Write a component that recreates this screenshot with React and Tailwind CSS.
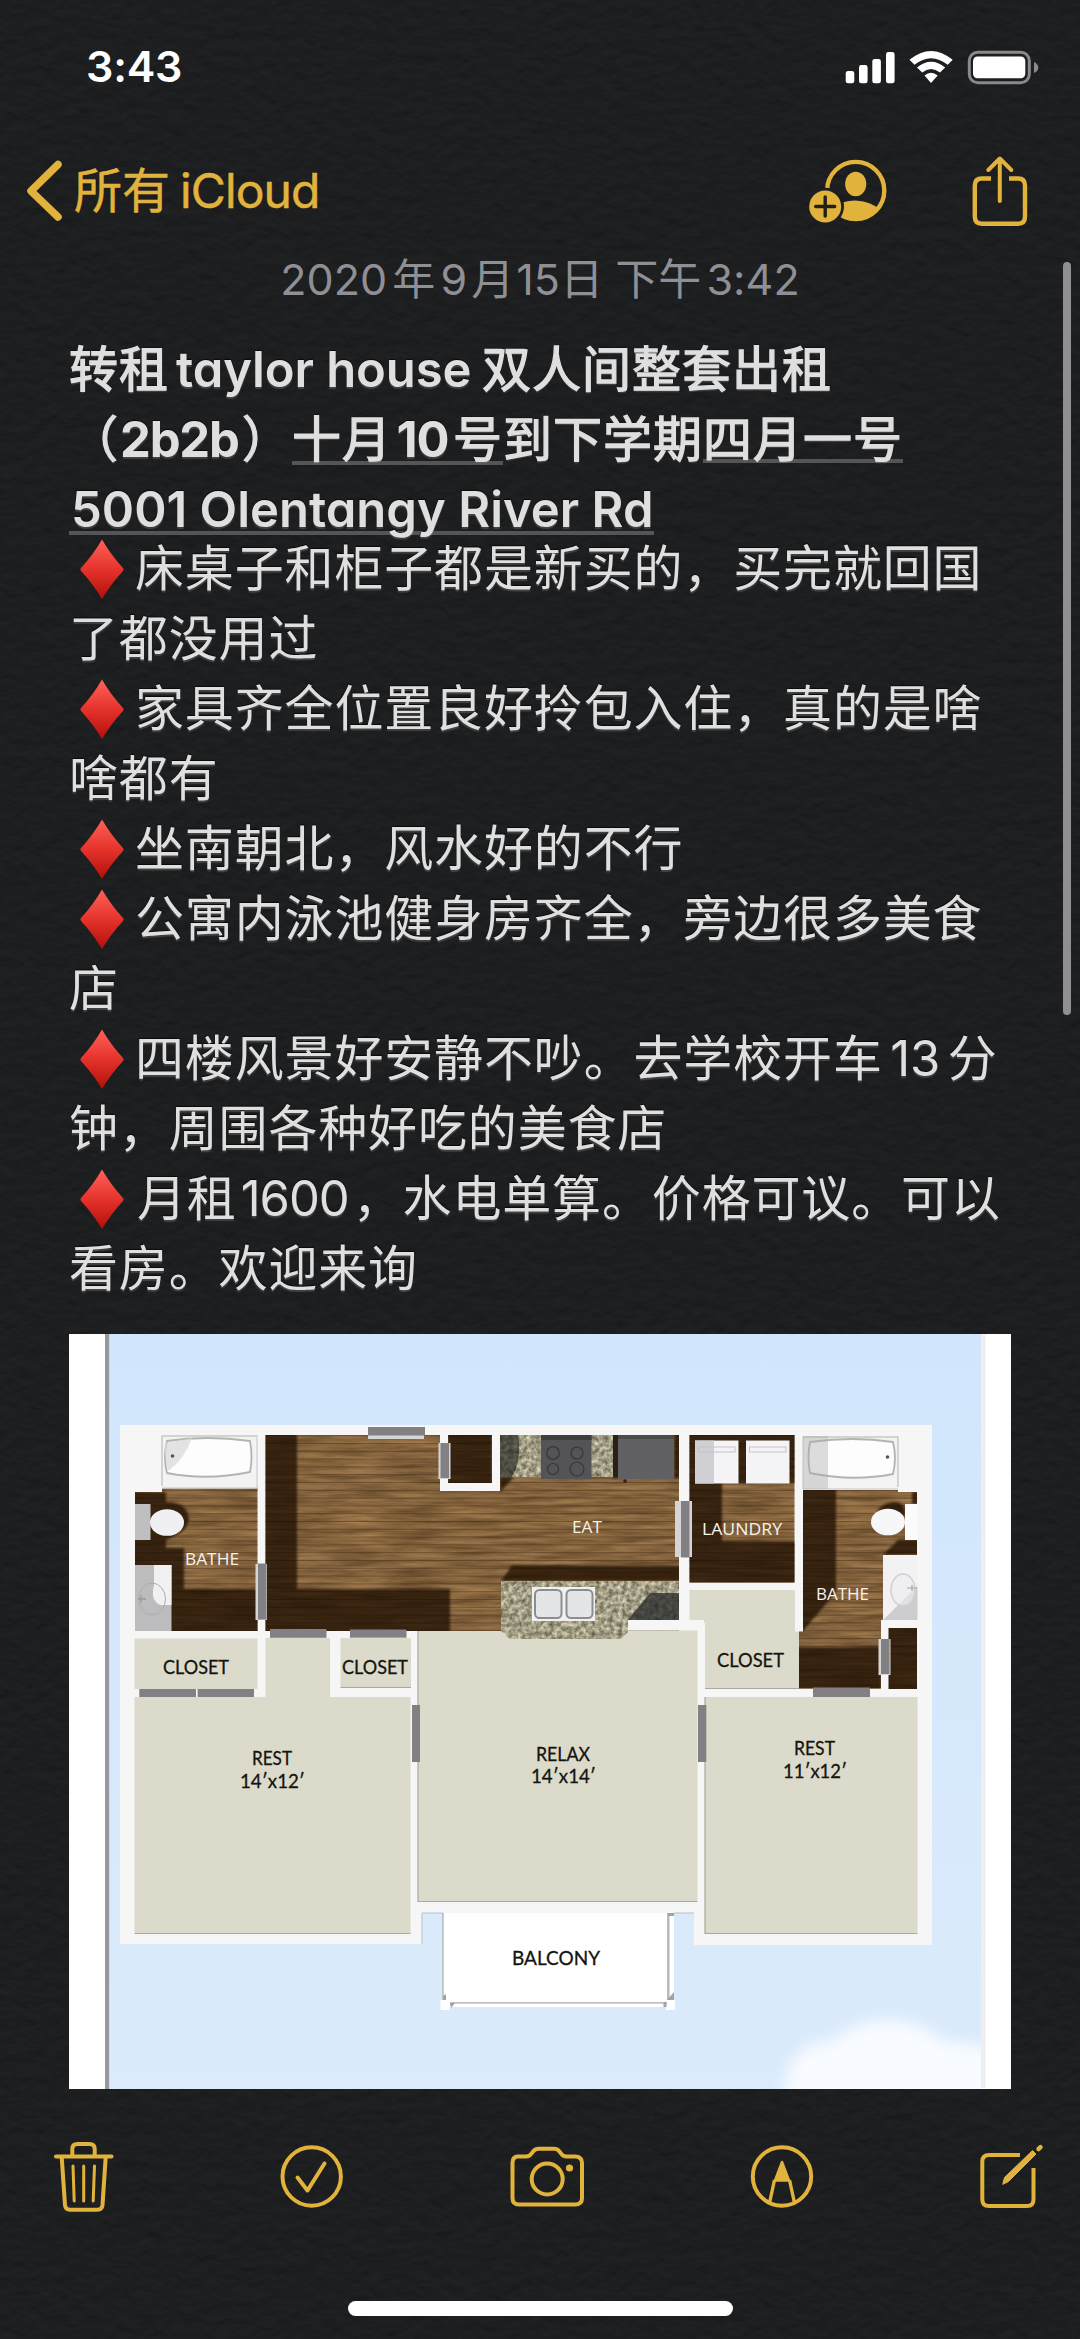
import React from "react";

const GOLD = "#e2b33c";

function PaperTexture() {
  return (
    <svg className="absolute inset-0 h-full w-full" aria-hidden="true">
      <filter id="paper" x="0" y="0" width="100%" height="100%" colorInterpolationFilters="sRGB">
        <feTurbulence type="fractalNoise" baseFrequency="0.065 0.085" numOctaves="3" seed="8" />
        <feDiffuseLighting surfaceScale="1.1" diffuseConstant="1" lightingColor="#212325">
          <feDistantLight azimuth="270" elevation="60" />
        </feDiffuseLighting>
      </filter>
      <rect width="100%" height="100%" filter="url(#paper)" />
    </svg>
  );
}

function StatusBar() {
  return (
    <div className="flex h-[133px] shrink-0 items-center justify-between pl-[86px] pr-[41px] text-white">
      <span className="text-[43px] font-semibold leading-none tracking-[-0.2px]">3:43</span>
      <svg width="194" height="36" viewBox="846 48 194 36" fill="#fff">
        <rect x="846.7" y="70" width="8.6" height="12.3" rx="2.4" />
        <rect x="860" y="64" width="8.6" height="18.3" rx="2.4" />
        <rect x="873.3" y="58" width="8.6" height="24.3" rx="2.4" />
        <rect x="887" y="51" width="8.6" height="31.3" rx="2.4" />
        <path d="M910.5 58.8 Q932 41 953.7 58.8 L948.7 63.8 Q932 50.5 915.5 63.8 Z" />
        <path d="M918 66.5 Q932 55 946.2 66.5 L941 71.5 Q932 64.5 923.2 71.5 Z" />
        <path d="M925.5 74.4 Q932 69 938.7 74.4 L932 82 Z" />
        <rect x="970.3" y="51.3" width="60" height="30.4" rx="8.5" fill="none" stroke="#8a8a8c" strokeWidth="3" />
        <rect x="974" y="55.5" width="52.3" height="21.7" rx="4.5" />
        <path d="M1035 61 Q1039.3 63 1039.3 66.5 Q1039.3 70 1035 72 Z" fill="#8a8a8c" />
      </svg>
    </div>
  );
}

function NavBar() {
  return (
    <div className="flex h-[116px] shrink-0 items-center justify-between pl-[26px] pr-[51px]">
      <div className="flex items-center">
        <svg width="36" height="62" viewBox="26 160 36 62" fill="none" stroke={GOLD} strokeWidth="7.5" strokeLinecap="round" strokeLinejoin="round">
          <path d="M58 164.5 L31 191 L58 217" />
        </svg>
        <span className="ml-[12px] whitespace-nowrap text-[48px] leading-[60px] text-[#e2b33c] [-webkit-text-stroke:0.5px_#e2b33c]">
          所有<span className="ml-[10px] tracking-[-0.9px]">iCloud</span>
        </span>
      </div>
      <svg width="222" height="72" viewBox="807 153 222 72" fill="none" stroke={GOLD} strokeWidth="4.4">
        <clipPath id="avatar">
          <circle cx="855.7" cy="188.5" r="29" />
        </clipPath>
        <mask id="badge-gap">
          <rect x="800" y="140" width="240" height="100" fill="#fff" stroke="none" />
          <circle cx="825.2" cy="204.5" r="18.8" fill="#000" stroke="none" />
        </mask>
        <g mask="url(#badge-gap)">
          <circle cx="855.7" cy="188.5" r="28.6" />
          <ellipse cx="855.7" cy="182" rx="10.6" ry="12.2" fill={GOLD} stroke="none" />
          <path clipPath="url(#avatar)" d="M834 209 Q838 198.5 855.7 198.5 Q872 199.5 880 208 L880 222 L834 222 Z" fill={GOLD} stroke="none" />
        </g>
        <circle cx="825.2" cy="204.5" r="16" fill={GOLD} stroke="none" />
        <path d="M825.2 195 V214 M815.7 204.5 H834.7" stroke="#241f14" strokeWidth="3.4" strokeLinecap="round" />
        <path d="M991 176.5 H982 Q974.8 176.5 974.8 183.5 V214.5 Q974.8 221.7 982 221.7 H1018 Q1025 221.7 1025 214.5 V183.5 Q1025 176.5 1018 176.5 H1009" />
        <path d="M999.8 199 V156.5 M988.3 168 L999.8 156.5 L1011.3 168" strokeWidth="4" strokeLinecap="round" strokeLinejoin="round" />
      </svg>
    </div>
  );
}

function Diamond() {
  return (
    <svg className="inline-block h-[62px] w-[66px] shrink-0" viewBox="0 0 66 62">
      <defs>
        <linearGradient id="red" x1="0" y1="0" x2="0" y2="1">
          <stop offset="0" stopColor="#ff6259" />
          <stop offset="0.5" stopColor="#e5332b" />
          <stop offset="1" stopColor="#b30f0b" />
        </linearGradient>
      </defs>
      <path d="M33 1.5 Q42 17 54 30 Q55.5 31.5 54 33 Q42 46 33 61 Q24 46 12 33 Q10.5 31.5 12 30 Q24 17 33 1.5 Z" fill="url(#red)" />
    </svg>
  );
}

function Line({ mark, children }) {
  return (
    <div className="flex h-[70px] items-center whitespace-nowrap leading-[70px]">
      {mark && <Diamond />}
      <span>{children}</span>
    </div>
  );
}

function Han({ children }) {
  return <span className="font-normal [-webkit-text-stroke:1.3px_#dfdfe0]">{children}</span>;
}

const textShadow = "[text-shadow:0_-1px_1px_rgba(0,0,0,0.7),0_2px_1px_rgba(150,150,150,0.3)]";

function Note() {
  return (
    <div className={"pl-[69px] text-[49px] text-[#dfdfe0] " + textShadow}>
      <div className="h-[200px] pt-px font-semibold whitespace-nowrap tracking-[1px] leading-[70px]">
        <div className="flex h-[70px]">
          <Han>转租</Han>
          <span className="ml-[7px] w-[306px] tracking-[-0.1px] [font-feature-settings:'cv11']">taylor house</span>
          <Han>双人间整套出租</Han>
        </div>
        <div className="flex h-[70px]">
          <span className="w-[51px]"><Han>（</Han></span>
          <span className="w-[122px] font-bold tracking-[-1.2px]">2b2b</span>
          <span className="w-[50px]"><Han>）</Han></span>
          <span className="flex h-[60px] border-b-4 border-[#555557]">
            <Han>十月</Han><span className="w-[61px] text-center font-bold tracking-[-1px]">10</span><Han>号</Han>
          </span>
          <Han>到下学期</Han>
          <span className="h-[58px] border-b-4 border-[#555557]"><Han>四月一号</Han></span>
        </div>
        <div className="flex h-[59px]">
          <span className="h-[60px] w-[585px] border-b-4 border-[#555557] pl-[2px] tracking-[0px] [font-feature-settings:'cv11']">5001 Olentangy River Rd</span>
        </div>
      </div>
      <div className="tracking-[0.85px]">
        <Line mark>床桌子和柜子都是新买的，买完就回国</Line>
        <Line>了都没用过</Line>
        <Line mark>家具齐全位置良好拎包入住，真的是啥</Line>
        <Line>啥都有</Line>
        <Line mark>坐南朝北，风水好的不行</Line>
        <Line mark>公寓内泳池健身房齐全，旁边很多美食</Line>
        <Line>店</Line>
        <Line mark>
          四楼风景好安静不吵。去学校开车<span className="inline-block w-[65px] text-center tracking-[0px]">13</span>分
        </Line>
        <Line>钟，周围各种好吃的美食店</Line>
        <Line mark>
          <span className="ml-[2px]">月租</span><span className="inline-block w-[116px] text-center tracking-[-1px]">1600</span>，水电单算。价格可议。可以
        </Line>
        <Line>看房。欢迎来询</Line>
      </div>
    </div>
  );
}

const BEIGE = "#dcdaca";
const DOOR = "#828082";

const carpets = [
  [134.5, 1638.5, 123, 50.5],
  [134.5, 1697, 276, 236.5],
  [265.5, 1638, 64.5, 60],
  [340.5, 1638, 70.5, 49.5],
  [418, 1631, 279.5, 270.5],
  [689.5, 1590, 105.5, 33],
  [705, 1622, 94, 66.5],
  [705, 1697, 212.5, 236.5],
];

const doors = [
  [368, 1427, 57, 8.5],
  [440.5, 1443, 8.5, 35],
  [258, 1563.5, 8.5, 56],
  [270, 1629, 56.5, 8.8],
  [350, 1629.5, 56.5, 8.2],
  [139.3, 1689, 56.7, 8],
  [197.6, 1689, 56.4, 8],
  [412, 1705, 8, 57],
  [698, 1705, 8.3, 57],
  [681, 1501, 8.5, 56.5],
  [881, 1639, 8.5, 35],
  [813, 1687.5, 57, 9.5],
];

const labels = [
  ["CLOSET", 163, 1674, 66, 0],
  ["CLOSET", 342, 1674, 66, 0],
  ["CLOSET", 717, 1666.5, 67, 0],
  ["REST", 252, 1764.5, 40, 0],
  ["14′x12′", 240, 1788, 65, 0],
  ["RELAX", 536, 1760.5, 54, 0],
  ["14′x14′", 531, 1783, 65, 0],
  ["REST", 794, 1755, 41, 0],
  ["11′x12′", 783, 1778, 64, 0],
  ["BALCONY", 512, 1965, 88, 0],
  ["BATHE", 185, 1565, 54, 1],
  ["EAT", 572, 1532.5, 30, 1],
  ["LAUNDRY", 702, 1534.5, 80, 1],
  ["BATHE", 816, 1599.5, 53, 1],
];

function Tub({ x, y, flip }) {
  return (
    <g transform={flip ? `translate(${x + 95} ${y}) scale(-1 1)` : `translate(${x} ${y})`}>
      <rect width="95" height="53" fill="#f3f3f3" />
      <path d="M0 51 V1 H95" fill="none" stroke="#c9c9ca" strokeWidth="1.5" />
      <path d="M5 6 Q45 0 88 6 Q91 22 88 37 Q45 46 5 38 Q1 22 5 6 Z" fill="#fdfdfd" stroke="#b3b3b5" strokeWidth="1.8" />
      {!flip && <path d="M3 8 L30 3 Q22 25 6 36 Q2 22 3 8 Z" fill="#d9d9da" opacity="0.75" />}
      <circle cx="10.5" cy="21" r="1.8" fill="#555" />
      <path d="M0 53 H95 M95 0 V53" stroke="#d5d5d5" strokeWidth="1.5" />
    </g>
  );
}

const WOOD =
  "M135 1492 H162 V1487 H257.5 V1631 H135 Z M265.5 1435 H679 V1631 H265.5 Z M689.5 1435 H794.5 V1582.5 H689.5 Z M803 1490 H898 V1492 H917 V1628 H881 V1688.5 H799 V1631 H803 Z M888 1628 H917 V1689 H888 Z";

function FloorPlan() {
  return (
    <svg className="ml-[69px] block h-[755px] w-[942px]" viewBox="69 1334 942 755">
      <defs>
        <linearGradient id="sky" x1="0" y1="0" x2="0" y2="1">
          <stop offset="0" stopColor="#d1e6fd" />
          <stop offset="1" stopColor="#dbebfb" />
        </linearGradient>
        <filter id="soft" x="-30%" y="-30%" width="160%" height="160%">
          <feGaussianBlur stdDeviation="7" />
        </filter>
        <filter id="shade" x="-5%" y="-5%" width="110%" height="110%">
          <feGaussianBlur stdDeviation="1" />
        </filter>
        <filter id="grain" x="0" y="0" width="100%" height="100%" colorInterpolationFilters="sRGB">
          <feTurbulence type="fractalNoise" baseFrequency="0.018 0.2" numOctaves="4" seed="4" />
          <feColorMatrix values="0.34 0 0 0 0.35  0.28 0 0 0 0.25  0.2 0 0 0 0.14  0 0 0 0 1" />
          <feComposite in2="SourceGraphic" operator="in" />
        </filter>
        <filter id="granite" x="0" y="0" width="100%" height="100%" colorInterpolationFilters="sRGB">
          <feTurbulence type="fractalNoise" baseFrequency="0.22" numOctaves="4" seed="2" />
          <feColorMatrix values="0.75 0 0 0 0.26  0.75 0 0 0 0.24  0.7 0 0 0 0.17  0 0 0 0 1" />
          <feComposite in2="SourceGraphic" operator="in" />
        </filter>
        <pattern id="planks" width="90" height="7.8" patternUnits="userSpaceOnUse">
          <path d="M0 0.5 H90" stroke="#3d2713" strokeWidth="0.9" opacity="0.5" />
        </pattern>
        <clipPath id="sky-clip">
          <rect x="109.5" y="1334" width="871.5" height="755" />
        </clipPath>
        <clipPath id="wood-clip">
          <path d={WOOD} />
        </clipPath>
      </defs>

      <rect x="69" y="1334" width="942" height="755" fill="#fff" />
      <rect x="105" y="1334" width="4.5" height="755" fill="#97999c" />
      <rect x="109.5" y="1334" width="871.5" height="755" fill="url(#sky)" />
      <rect x="981" y="1334" width="4.5" height="754" fill="#efeff2" />
      <g clipPath="url(#sky-clip)">
        <path d="M782 2105 Q786 2040 830 2042 Q860 2018 893 2020 Q925 2023 940 2040 L1000 2048 V2110 Z" fill="#f8fbff" filter="url(#soft)" />
      </g>

      <path d="M120 1425 H932 V1945 H694 V1913 H422 V1944 H120 Z" fill="#f6f6f7" />
      <path d="M422 1944 V1913 H443 M674 1913 H694" fill="none" stroke="#b9bfc8" strokeWidth="1" />

      <rect x="443" y="1913" width="231" height="94" fill="#fff" />
      <rect x="440.5" y="2000" width="9" height="10" fill="#fff" />
      <rect x="666" y="2000" width="9" height="10" fill="#fff" />
      <path d="M443 1913 V2000 M450 2002.8 H667" stroke="#a9abad" strokeWidth="1.2" />
      <path d="M668.3 1913 V2000" stroke="#b5b6b8" strokeWidth="2.4" />
      <path d="M450 2003 H455 L451 2008 Z M667 2000 L674 1992 V2000 Z M443 1996 l3 -2 v6 h-3 Z M668 1913 h6 v3 h-6 Z M663.5 2002 h3 v5 h-3 Z" fill="#a0a2a4" />

      {carpets.map(([x, y, w, h], i) => (
        <rect key={i} x={x} y={y} width={w} height={h} fill={BEIGE} />
      ))}
      <path d="M134.5 1933.5 H410.5 M418 1631 V1901.5 H697.5 M705 1697 V1933.5 H917.5 M340.5 1687.5 H411 M705 1688.5 H799" fill="none" stroke="#aaa99e" strokeWidth="1.2" />

      <path filter="url(#grain)" d={WOOD} fill="#000" />
      <path d={WOOD} fill="url(#planks)" />

      <g clipPath="url(#wood-clip)">
        <g fill="#1b0f06" opacity="0.74" filter="url(#shade)">
          <path d="M130 1492 H166 V1502 Q188 1502 189 1520 Q187 1532 166 1540 V1548 H184 V1589 H262 V1635 H130 Z" />
          <path d="M262 1430 H297 V1589 H450 V1635 H262 Z" />
          <path d="M448 1430 H492 V1487 H448 Z M500 1477 H514 L500 1492 Z M674 1430 H684 V1478 H674 Z M613 1430 H618 V1478 H613 Z" />
          <path d="M501 1581 L512 1565.5 H684 V1581 Z" />
          <path d="M685 1430 H798 V1483 H722 V1541 H798 V1586 H685 Z" />
          <path d="M800 1485 H836 V1592 L803 1631 H800 Z M795 1647 H881 V1693 H795 Z M885 1625 H921 V1693 H885 Z" />
          <path d="M877 1511 Q884 1502 896 1502 Q905 1503 905 1516 Z M883 1555 L898 1540 H921 V1555 Z M912 1492 H921 V1504 H912 Z" />
        </g>
      </g>

      <rect x="440" y="1435" width="8" height="56" fill="#f6f6f7" />
      <rect x="440" y="1483" width="60" height="8" fill="#f6f6f7" />
      <rect x="492" y="1435" width="8" height="56" fill="#f6f6f7" />

      <Tub x={162} y={1435} />
      <Tub x={803} y={1436} flip />
      <rect x="803" y="1436" width="25" height="53" fill="#aaa" opacity="0.4" />

      <rect x="135" y="1504" width="15.5" height="36" fill="#bfbfc2" />
      <ellipse cx="167" cy="1522.5" rx="17" ry="13.3" fill="#f0f0f2" />
      <rect x="135" y="1565" width="36.5" height="66" fill="#bcbcbe" />
      <path d="M154 1565 H171.5 V1605 H160 Q150 1600 154 1585 Z" fill="#f1f1f2" />
      <ellipse cx="152" cy="1599" rx="13.5" ry="16" fill="none" stroke="#acacae" strokeWidth="1" />
      <path d="M138 1599 h8 M141 1595 v8" stroke="#9b9b9d" strokeWidth="1.3" />

      <rect x="905" y="1504" width="12.5" height="36" fill="#fbfbfc" />
      <ellipse cx="888" cy="1522" rx="17" ry="13.3" fill="#f7f7f9" />
      <rect x="883" y="1555" width="34.5" height="65" fill="#f2f2f4" />
      <path d="M883 1620 L917.5 1586 V1620 Z" fill="#cdcdd0" />
      <ellipse cx="903" cy="1590" rx="12" ry="16" fill="#ececee" fillOpacity="0.6" stroke="#d0d0d2" strokeWidth="1.5" />
      <path d="M907 1588 h10 M912 1585 v6" stroke="#a5a5a7" strokeWidth="1.2" />

      <g filter="url(#granite)" fill="#000">
        <path d="M500 1435 H613 V1477 H500 Z" />
        <path d="M501 1581 H679 V1620 H628 V1632 L621 1639 H510 L501 1631 Z" />
      </g>
      <path d="M500 1435 H518 Q522 1460 512 1477 H500 Z" fill="#22231e" opacity="0.65" />
      <path d="M628 1620 L650 1593 H679 V1620 Z" fill="#26282a" opacity="0.75" />
      <rect x="541" y="1435" width="50.5" height="44" fill="#545456" />
      <rect x="541" y="1435" width="50.5" height="5" fill="#3e3e40" />
      <g fill="none" stroke="#363638" strokeWidth="1.2">
        <circle cx="553" cy="1453" r="6.3" />
        <circle cx="577" cy="1453" r="6" />
        <circle cx="553" cy="1469" r="5.5" />
        <circle cx="577" cy="1469" r="7" />
      </g>
      <rect x="613" y="1435" width="5" height="42" fill="#2a2018" />
      <rect x="618" y="1435" width="56" height="44" fill="#616163" />
      <rect x="618" y="1435" width="56" height="4" fill="#4a4a4c" />
      <circle cx="625" cy="1481" r="1.8" fill="#2a211a" />

      <rect x="532" y="1587" width="63" height="34" fill="#f0f0f1" />
      <rect x="535" y="1590" width="26.5" height="28" rx="4.5" fill="#e4e5e7" stroke="#8c8d90" strokeWidth="2" />
      <rect x="566.5" y="1590" width="26" height="28" rx="4.5" fill="#e4e5e7" stroke="#8c8d90" strokeWidth="2" />

      {[695, 746].map((x, i) => (
        <g key={x}>
          <rect x={x} y="1440.5" width="43.5" height="43" fill="#f4f4f6" />
          {i === 0 && <rect x={x} y="1440.5" width="19" height="43" fill="#d0d0d4" />}
          <rect x={x + 3.5} y="1447" width="36.5" height="5" fill="none" stroke="#c3c3c6" strokeWidth="1" />
        </g>
      ))}

      <rect x="795" y="1583" width="8" height="48.5" fill="#f6f6f7" />
      <rect x="628" y="1620" width="76" height="10.5" fill="#f6f6f7" />
      <rect x="881" y="1620" width="51" height="8" fill="#f6f6f7" />
      <rect x="881" y="1620" width="7.5" height="77" fill="#f6f6f7" />
      <rect x="628" y="1630.5" width="69.5" height="1" fill={BEIGE} />

      <g fill="#d5d5d6">
        <rect x="368" y="1435" width="56" height="4" />
        <rect x="438.5" y="1443" width="12" height="36" />
        <rect x="255.5" y="1564" width="11.5" height="56" />
        <rect x="675" y="1501" width="17" height="56" />
        <rect x="878.5" y="1639" width="12" height="36" />
      </g>
      {doors.map(([x, y, w, h], i) => (
        <rect key={i} x={x} y={y} width={w} height={h} fill={DOOR} />
      ))}

      {labels.map(([text, x, y, w, light], i) => (
        <text
          key={i}
          x={x}
          y={y}
          textLength={w}
          lengthAdjust="spacingAndGlyphs"
          className={light ? "font-['Open_Sans'] text-[17px]" : "font-['Lato'] text-[20px]"}
          fill={light ? "#f6f2ec" : "#14140f"}
          stroke={light ? "none" : "#14140f"}
          strokeWidth={light ? 0 : 0.3}
        >
          {text}
        </text>
      ))}
    </svg>
  );
}

function Toolbar() {
  return (
    <div className="flex h-[175px] shrink-0 justify-between pl-[52px] pr-[36px] pt-[50px]">
      <svg width="64" height="76" viewBox="52 2139 64 76" fill="none" stroke={GOLD} strokeWidth="4" strokeLinecap="round" strokeLinejoin="round">
        <path d="M72.3 2155 V2149 Q72.3 2144 77.5 2144 H89.5 Q94.7 2144 94.7 2149 V2155" />
        <path d="M56 2156.5 H111.5" />
        <path d="M61.7 2157 L65 2205 Q65.5 2209.7 70 2209.7 H97.5 Q102 2209.7 102.5 2205 L105.7 2157" />
        <path d="M73 2166 L74.2 2201 M83.7 2166 V2201 M94.5 2166 L93.2 2201" strokeWidth="3" />
      </svg>
      <svg width="66" height="76" viewBox="279 2139 66 76" fill="none" stroke={GOLD} strokeWidth="4" strokeLinecap="round" strokeLinejoin="round">
        <circle cx="311.7" cy="2176.5" r="29.2" />
        <path d="M297.5 2177.5 L307.5 2190.5 L324.5 2163.5" />
      </svg>
      <svg width="78" height="76" viewBox="508 2139 78 76" fill="none" stroke={GOLD} strokeWidth="4" strokeLinejoin="round">
        <path d="M518 2156.5 H526 Q529.5 2156.5 531.5 2153.5 L533.5 2151 Q535.3 2148.7 538.5 2148.7 H554 Q557.3 2148.7 559 2151 L561 2153.5 Q563 2156.5 566.5 2156.5 H575 Q582 2156.5 582 2163 V2198 Q582 2204.5 575 2204.5 H519 Q512.5 2204.5 512.5 2198 V2163 Q512.5 2156.5 518 2156.5 Z" />
        <circle cx="547.2" cy="2179" r="15.5" />
        <circle cx="569.5" cy="2168" r="3.6" fill={GOLD} stroke="none" />
      </svg>
      <svg width="66" height="76" viewBox="749 2139 66 76" fill="none" stroke={GOLD} strokeWidth="4" strokeLinejoin="round">
        <circle cx="782" cy="2176.5" r="29.2" />
        <path d="M782 2162 L789 2180.5 H775 Z" fill={GOLD} strokeWidth="2.5" />
        <path d="M774.5 2180 L769.5 2203 M789.5 2180 L794.5 2203" strokeWidth="3.4" />
      </svg>
      <svg width="66" height="76" viewBox="978 2139 66 76" fill="none" stroke={GOLD} strokeWidth="4" strokeLinecap="round" strokeLinejoin="round">
        <path d="M1020 2155 H989 Q982.3 2155 982.3 2161.5 V2199.5 Q982.3 2206 989 2206 H1027 Q1033.5 2206 1033.5 2199.5 V2168" strokeLinecap="butt" />
        <path d="M1002.8 2184 L1004.5 2177.5 L1032.5 2150.5 L1036 2154 L1008.5 2181.5 Z" fill={GOLD} strokeWidth="1" />
        <path d="M1038.5 2149 L1040.5 2147.2" strokeWidth="4.5" />
      </svg>
    </div>
  );
}

export default function App() {
  return (
    <div className="relative h-[2339px] w-[1080px] overflow-hidden bg-[#1d1e20] font-['Inter','Noto_Sans_CJK_SC',sans-serif]">
      <PaperTexture />
      <div className="relative flex h-full flex-col">
        <StatusBar />
        <NavBar />
        <div className="flex h-[85px] shrink-0 justify-center whitespace-nowrap text-[43px] leading-[60px] tracking-[0.1px] text-[#8f8f94]">
          2020<span className="ml-[5px]">年</span><span className="ml-[5px]">9</span><span className="ml-[4px]">月</span><span className="ml-[2px]">15</span><span>日</span>
          <span className="ml-[12px]">下午</span><span className="ml-[5px]">3:42</span>
        </div>
        <div className="h-[1000px] shrink-0">
          <Note />
        </div>
        <FloorPlan />
        <Toolbar />
        <div className="mx-auto mt-[37px] h-[15px] w-[385px] shrink-0 rounded-full bg-white" />
      </div>
      <div className="absolute top-[262px] right-[9px] h-[753px] w-[8px] rounded-full bg-[#8f8f91]" />
    </div>
  );
}
